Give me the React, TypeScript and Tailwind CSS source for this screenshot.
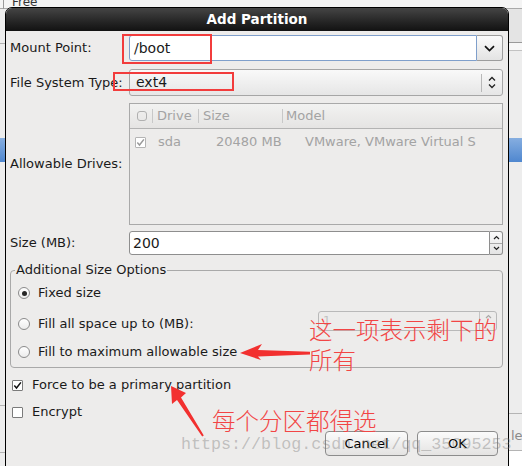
import React from "react";

function ChevronDown() {
  return (
    <svg width="11" height="7" viewBox="0 0 11 7">
      <path d="M1 1.2l4.5 4.3 4.5-4.3" fill="none" stroke="#111" strokeWidth="1.7" />
    </svg>
  );
}

function UpDown({ color = "#222" }: { color?: string }) {
  return (
    <svg width="8" height="13" viewBox="0 0 8 13">
      <path d="M1 4.5l3-3 3 3" fill="none" stroke={color} strokeWidth="1.3" />
      <path d="M1 8.5l3 3 3-3" fill="none" stroke={color} strokeWidth="1.3" />
    </svg>
  );
}

function Check({ dim = false }: { dim?: boolean }) {
  return (
    <span
      className={`flex h-[11px] w-[11px] items-center justify-center rounded-[1px] border bg-white ${
        dim ? "border-[#b4b4b4] bg-[#f1f1f1]" : "border-[#7b7b7b]"
      }`}
    >
      <svg width="9" height="9" viewBox="0 0 9 9">
        <path d="M1.3 4.6l2.2 2.4 4.4-5.6" fill="none" stroke={dim ? "#9a9a9a" : "#111"} strokeWidth="1.5" />
      </svg>
    </span>
  );
}

function Radio({ on = false }: { on?: boolean }) {
  return (
    <span className="flex h-[12px] w-[12px] items-center justify-center rounded-full border border-[#8b8b8b] bg-gradient-to-b from-white to-[#ececec]">
      {on && <span className="h-[5px] w-[5px] rounded-full bg-[#262626]" />}
    </span>
  );
}

function Button({ label, w }: { label: string; w: string }) {
  return (
    <div
      className={`flex h-[25px] ${w} items-center justify-center rounded-[4px] border border-[#8c8c8c] bg-gradient-to-b from-[#fbfbfb] to-[#e4e3e2] text-[13px] text-black`}
    >
      {label}
    </div>
  );
}

export default function App() {
  return (
    <div className="relative h-[466px] w-[522px] overflow-hidden bg-[#ededed] font-['DejaVu_Sans',sans-serif] text-[13px] text-[#1a1a1a]">
      {/* desktop behind the dialog */}
      <div className="absolute left-0 top-0 h-[9px] w-[522px] border-b border-[#a9a9a9] bg-[#f4f4f4]">
        <span className="absolute left-[12px] top-[-7px] text-[12px] text-[#333]">Free</span>
      </div>
      <div className="absolute left-[3px] top-0 h-[9px] w-px bg-[#9a9a9a]" />
      <div className="absolute left-0 top-[43px] h-px w-[6px] bg-[#b0b0b0]" />
      <div className="absolute right-0 top-[9px] h-[33px] w-[14px] bg-[#e4e4e4]" />
      <div className="absolute right-0 top-[42px] h-px w-[14px] bg-[#9a9a9a]" />
      <div className="absolute right-0 top-[43px] h-[7px] w-[14px] bg-[#f7f7f7]" />
      <div className="absolute right-0 top-[50px] h-px w-[14px] bg-[#c2c2c2]" />
      <div className="absolute left-0 top-[138px] h-[24px] w-[6px] bg-gradient-to-b from-[#86aee0] to-[#4f87cf]" />
      <div className="absolute right-0 top-[138px] h-[24px] w-[14px] bg-gradient-to-b from-[#86aee0] to-[#4f87cf]" />
      <div className="absolute right-0 top-[413px] h-px w-[14px] bg-[#b4b4b4]" />
      <span className="absolute left-[511px] top-[426px] text-[13px] text-[#8a8a8a]">le</span>
      <div className="absolute right-0 top-[450px] h-px w-[14px] bg-[#b4b4b4]" />
      <div className="absolute right-0 top-[451px] h-[15px] w-[14px] bg-white" />
      <div className="absolute left-0 top-[405px] h-px w-[6px] bg-[#b4b4b4]" />
      <div className="absolute left-0 top-[452px] h-px w-[6px] bg-[#b4b4b4]" />

      {/* dialog */}
      <div className="absolute left-[5px] top-[7px] flex h-[470px] w-[504px] flex-col overflow-hidden rounded-t-[7px] border border-black bg-[#edeceb]">
        <div className="flex h-[23px] shrink-0 items-center justify-center bg-gradient-to-b from-[#454545] to-[#121212] pb-[1px] text-[13.5px] font-bold text-white">
          Add Partition
        </div>

        <div className="flex flex-col pl-[4px] pr-[5px]">
          {/* mount point */}
          <div className="mt-[4px] flex h-[26px] items-center">
            <div className="w-[119px]">Mount Point:</div>
            <div className="flex h-full flex-1">
              <div className="flex flex-1 items-center rounded-l-[3px] border border-[#7f9fcb] bg-white pl-[4px] text-[14px]">
                /boot
              </div>
              <div className="flex w-[26px] items-center justify-center rounded-r-[3px] border border-l-0 border-[#9d9d9d] bg-gradient-to-b from-[#fbfbfb] to-[#e3e3e3]">
                <ChevronDown />
              </div>
            </div>
          </div>

          {/* file system type */}
          <div className="mt-[8px] flex h-[27px] items-center">
            <div className="w-[119px]">File System Type:</div>
            <div className="flex h-full flex-1 items-center rounded-[3px] border border-[#a6a6a6] bg-gradient-to-b from-[#f9f9f9] to-[#e6e6e6]">
              <span className="flex-1 pl-[6px] text-[14px]">ext4</span>
              <span className="h-[18px] w-px bg-[#b8b8b8]" />
              <span className="flex w-[20px] justify-center">
                <UpDown />
              </span>
            </div>
          </div>

          {/* allowable drives */}
          <div className="mt-[7px] flex h-[122px] items-center">
            <div className="w-[119px]">Allowable Drives:</div>
            <div className="flex h-full flex-1 flex-col border border-[#a9a9a9] bg-[#edeceb] text-[#a3a3a3]">
              <div className="flex h-[25px] shrink-0 items-center border-b border-[#b3b3b3] bg-gradient-to-b from-[#f2f2f1] to-[#e5e4e3]">
                <div className="flex w-[22px] pl-[7px]">
                  <span className="h-[10px] w-[10px] rounded-[3px] border border-[#b0b0b0]" />
                </div>
                <span className="h-[14px] w-px bg-[#c8c8c8]" />
                <div className="w-[45px] pl-[4px]">Drive</div>
                <span className="h-[14px] w-px bg-[#c8c8c8]" />
                <div className="w-[83px] pl-[4px]">Size</div>
                <span className="h-[14px] w-px bg-[#c8c8c8]" />
                <div className="pl-[3px]">Model</div>
              </div>
              <div className="mt-[6px] flex h-[14px] items-center">
                <div className="w-[28px] pl-[5px]">
                  <Check dim />
                </div>
                <div className="w-[58px]">sda</div>
                <div className="w-[89px]">20480 MB</div>
                <div className="whitespace-nowrap">VMware, VMware Virtual S</div>
              </div>
            </div>
          </div>

          {/* size */}
          <div className="mt-[6px] flex h-[24px] items-center">
            <div className="w-[119px]">Size (MB):</div>
            <div className="flex h-full flex-1">
              <div className="flex flex-1 items-center rounded-l-[3px] border border-[#8e8e8e] bg-white pl-[3px] text-[14px]">
                200
              </div>
              <div className="flex w-[13px] flex-col rounded-r-[3px] border border-l-0 border-[#8e8e8e] bg-gradient-to-b from-[#fafafa] to-[#e4e4e4]">
                <div className="flex flex-1 items-center justify-center border-b border-[#a8a8a8]">
                  <svg width="7" height="5" viewBox="0 0 7 5">
                    <path d="M1 4l2.5-2.5 2.5 2.5" fill="none" stroke="#222" strokeWidth="1.2" />
                  </svg>
                </div>
                <div className="flex flex-1 items-center justify-center">
                  <svg width="7" height="5" viewBox="0 0 7 5">
                    <path d="M1 1l2.5 2.5 2.5-2.5" fill="none" stroke="#222" strokeWidth="1.2" />
                  </svg>
                </div>
              </div>
            </div>
          </div>

          {/* additional size options */}
          <div className="relative mt-[15px] h-[98px] rounded-[4px] border border-[#a9a9a9] pl-[7px] pr-[5px]">
            <span className="absolute left-[4px] top-[-9px] bg-[#edeceb] px-px leading-[16px]">Additional Size Options</span>
            <div className="mt-[12px] flex h-[20px] items-center gap-[8px]">
              <Radio on />
              <span>Fixed size</span>
            </div>
            <div className="mt-[11px] flex h-[20px] items-center gap-[8px]">
              <Radio />
              <span>Fill all space up to (MB):</span>
              <div className="relative top-[-3px] ml-auto flex h-[20px] w-[179px] items-center rounded-[3px] border border-[#b9b9b9] text-[#c2c2c2]">
                <span className="flex-1 pl-[4px] text-[12px]">1</span>
                <span className="flex h-full w-[17px] items-start justify-center border-l border-[#c4c4c4] pt-[2px]">
                  <svg width="7" height="5" viewBox="0 0 7 5">
                    <path d="M1 4l2.5-2.5 2.5 2.5" fill="none" stroke="#a8a8a8" strokeWidth="1.2" />
                  </svg>
                </span>
              </div>
            </div>
            <div className="mt-[8px] flex h-[20px] items-center gap-[8px]">
              <Radio />
              <span>Fill to maximum allowable size</span>
            </div>
          </div>

          {/* checkboxes */}
          <div className="mt-[9px] flex h-[16px] items-center gap-[9px] pl-[2px]">
            <Check />
            <span>Force to be a primary partition</span>
          </div>
          <div className="mt-[11px] flex h-[16px] items-center gap-[9px] pl-[2px]">
            <span className="h-[11px] w-[11px] rounded-[1px] border border-[#7b7b7b] bg-white" />
            <span>Encrypt</span>
          </div>

          <div className="mt-[11px] flex justify-end gap-[9px] pr-[5px]">
            <Button label="Cancel" w="w-[83px]" />
            <Button label="OK" w="w-[81px]" />
          </div>
        </div>
      </div>

      {/* annotations */}
      <div className="absolute left-[122px] top-[34px] h-[30px] w-[90px] border-2 border-[#f23c3c]" />
      <div className="absolute left-[113px] top-[72px] h-[19px] w-[121px] border-2 border-[#f23c3c]" />

      <svg className="pointer-events-none absolute left-0 top-0" width="522" height="466" viewBox="0 0 522 466">
        <polygon points="240,353 262,344 258,350 310,351.8 310,354.6 258,356.5 261,360" fill="#f2302f" />
        <polygon points="171,386 186,393 181,397.5 203.8,435.6 202.2,436.4 177,400 172,404" fill="#f2302f" />
      </svg>

      <div className="absolute left-[309px] top-[314px] font-['Noto_Sans_CJK_SC',sans-serif] text-[23.5px] font-light leading-[30px] text-[#f24545]">
        这一项表示剩下的
        <br />
        所有
      </div>
      <div className="absolute left-[212px] top-[405px] font-['Noto_Sans_CJK_SC',sans-serif] text-[23.5px] font-light leading-[30px] text-[#f24545]">
        每个分区都得选
      </div>
      <div className="absolute left-[181px] top-[434px] whitespace-nowrap font-['Liberation_Mono',monospace] text-[16.7px] leading-[22px] text-[rgba(120,120,120,0.4)]">
        https://blog.csdn.net/qq_35095253
      </div>
    </div>
  );
}
